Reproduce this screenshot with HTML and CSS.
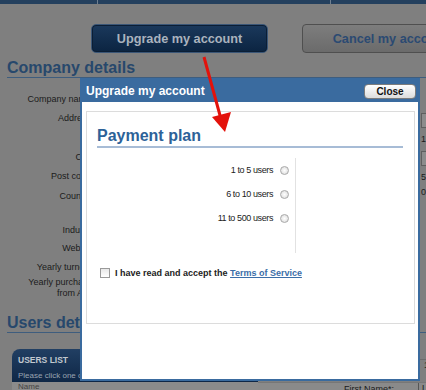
FILE: index.html
```html
<html><head><meta charset="UTF-8">
    <link rel="stylesheet" href="styles.css">
</head>
<body>

    <div id="strona">
        <div class="topbar"><span class="tick tick1"></span><span class="tick tick2"></span></div>

        <div class="actions">
            <button class="btn btn-upgrade">Upgrade my account</button>
            <button class="btn btn-cancel">Cancel my account</button>
        </div>

        <h2 class="section">Company details</h2>
        <div class="company">
            <div class="labels">
                <div class="row">Company name*:</div>
                <div class="row row-tall">Address*:</div>
                <div class="row">City*:</div>
                <div class="row row-20">Post code*:</div>
                <div class="row row-mid">Country*:</div>
                <div class="row row-18">Industry:</div>
                <div class="row">Website:</div>
                <div class="row row-16">Yearly turnover</div>
                <div class="row row-2">Yearly purchases<br>from Asia:</div>
            </div>
            <div class="values"></div>
            <div class="side">
                <div class="side-input"></div>
                <div class="side-text">1</div>
                <div class="side-input side-input2"></div>
                <div class="side-text">5</div>
                <div class="side-text side-text3">0</div>
            </div>
        </div>

        <h2 class="section section-users">Users details</h2>
        <div class="users">
            <div class="users-list">
                <div class="users-head">
                    <div class="users-title">USERS LIST</div>
                    <div class="users-hint">Please click one of the users to edit</div>
                </div>
                <div class="users-cols">Name</div>
            </div>
            <div class="user-form">
                <div class="uf-top">1</div>
                <div class="uf-row">
                    <span class="uf-label">First Name*:</span>
                    <span class="uf-value">Li</span>
                </div>
            </div>
        </div>
    </div>

    <!-- okno dialogowe nad strona -->
    <div class="dialog">
        <div class="dialog-bar">
            <span class="dialog-title">Upgrade my account</span>
            <button class="btn-close">Close</button>
        </div>
        <div class="dialog-body">
            <div class="plan-panel">
                <h3 class="plan-title">Payment plan</h3>
                <div class="plans">
                    <div class="plan">1 to 5 users <span class="radio"></span></div>
                    <div class="plan">6 to 10 users <span class="radio"></span></div>
                    <div class="plan">11 to 500 users <span class="radio"></span></div>
                </div>
                <div class="terms">
                    <span class="checkbox"></span>
                    <span class="terms-text">I have read and accept the <a href="#">Terms of Service</a></span>
                </div>
            </div>
        </div>
    </div>

    <svg class="arrow" width="426" height="390">
        <line x1="204" y1="57" x2="221" y2="119" stroke="#e3120b" stroke-width="3"></line>
        <polygon points="212,117 231,112 225,132" fill="#e3120b"></polygon>
    </svg>

</body></html>
```

FILE: styles.css
```css
body {
    margin: 0;
    font-family: "Liberation Sans", Arial, sans-serif;
    background-color: #7f7f7f;
    overflow: hidden;
}

#strona {
    width: 426px;
    height: 390px;
    overflow: hidden;
}

.topbar {
    height: 4px;
    background-color: #24405e;
}

.tick {
    display: inline-block;
    width: 1px;
    height: 4px;
    background-color: #6f7f90;
    vertical-align: top;
}

.tick1 {
    margin-left: 97px;
}

.tick2 {
    margin-left: 232px;
}

.actions {
    display: flex;
    gap: 34px;
    padding: 20px 0 0 91px;
}

.btn {
    flex: none;
    width: 177px;
    height: 29px;
    font-family: "Liberation Sans", Arial, sans-serif;
    font-size: 12.7px;
    font-weight: bold;
    padding: 0;
}

.btn-upgrade {
    border: 1px solid #3a5677;
    border-radius: 5px;
    background: linear-gradient(#1b395c, #0b2441);
    box-shadow: inset 0 0 0 1px #0b1e35;
    color: #aab3be;
}

.btn-cancel {
    border: 1px solid #4f4f4f;
    border-radius: 4px;
    background: linear-gradient(#7d7d7d, #6b6b6b);
    color: #2b4a72;
}

.section {
    margin: 5px 0 0 7px;
    font-size: 16px;
    line-height: 19px;
    font-weight: bold;
    color: #27486c;
    border-bottom: 1px solid #3e5d7e;
}

.section-users {
    margin-top: 14px;
}

.company {
    display: flex;
    padding-top: 15px;
}

.labels {
    flex: none;
    width: 97px;
    text-align: right;
    font-size: 9px;
    color: #1b1b1b;
}

.row {
    height: 19px;
    line-height: 12px;
}

.row-tall {
    height: 39px;
}

.row-20 {
    height: 20px;
}

.row-mid {
    height: 34px;
}

.row-18 {
    height: 18px;
}

.row-16 {
    height: 16px;
}

.row-2 {
    height: 22px;
    line-height: 11px;
}

.values {
    flex: none;
    width: 324px;
}

.side {
    flex: none;
    width: 40px;
    padding-top: 20px;
    font-size: 9px;
    color: #1b1b1b;
}

.side-input {
    height: 13px;
    border: 1px solid #5f5f5f;
    background-color: #8c8c8c;
}

.side-input2 {
    margin-top: 6px;
}

.side-text {
    line-height: 12px;
    margin-top: 5px;
}

.side-text3 {
    margin-top: 3px;
}

.users {
    display: flex;
    margin-top: 16px;
}

.users-list {
    flex: none;
    width: 246px;
    margin-left: 12px;
}

.users-head {
    height: 33px;
    border-radius: 8px 0 0 0;
    background: linear-gradient(#213f63, #0f2746);
    padding: 6px 0 0 6px;
    box-sizing: border-box;
}

.users-title {
    font-size: 8.5px;
    font-weight: bold;
    line-height: 10px;
    color: #c2c8cf;
}

.users-hint {
    margin-top: 6px;
    font-size: 8px;
    line-height: 10px;
    color: #9aa3b0;
}

.users-cols {
    height: 10px;
    background-color: #8b8b8b;
    font-size: 8px;
    padding-left: 6px;
    color: #444;
}

.user-form {
    flex: 1;
    margin-top: 10px;
    border-top: 1px solid #6c6c6c;
    font-size: 9px;
    color: #1b1b1b;
}

.uf-top {
    height: 22px;
    line-height: 10px;
    text-align: right;
}

.uf-row {
    display: flex;
    height: 10px;
    background-color: #8a8a8a;
    border-top: 1px solid #777;
}

.uf-label {
    width: 136px;
    text-align: right;
    padding-top: 1px;
}

.uf-value {
    margin-left: 24px;
    padding-left: 3px;
    border-left: 1px solid #555;
}

.dialog {
    position: absolute;
    left: 80px;
    top: 78px;
    width: 340px;
    height: 303px;
    box-sizing: border-box;
    border: 2px solid #3a6b9f;
    background-color: white;
}

.dialog-bar {
    display: flex;
    align-items: center;
    justify-content: space-between;
    height: 22px;
    background-color: #3a6b9f;
    padding: 0 2px 0 4px;
}

.dialog-title {
    font-size: 12px;
    font-weight: bold;
    color: white;
}

.btn-close {
    width: 52px;
    height: 15px;
    padding: 0;
    border: 1px solid #7c7c7c;
    border-radius: 4px;
    background: linear-gradient(#ffffff, #dcdcdc);
    font-family: "Liberation Sans", Arial, sans-serif;
    font-size: 10px;
    font-weight: bold;
    color: #111;
}

.dialog-body {
    padding: 9px 3px 0 4px;
}

.plan-panel {
    height: 213px;
    box-sizing: border-box;
    border: 1px solid #dcdcdc;
    padding: 14px 11px 0 10px;
}

.plan-title {
    margin: 0;
    font-size: 16px;
    line-height: 20px;
    font-weight: bold;
    color: #2d6298;
    border-bottom: 2px solid #a7bcd6;
}

.plans {
    width: 199px;
    box-sizing: border-box;
    margin-top: 10px;
    padding: 0 6px 23px 0;
    border-right: 1px solid #e2e2e2;
}

.plan {
    display: flex;
    justify-content: flex-end;
    align-items: center;
    gap: 7px;
    height: 24px;
    font-size: 9px;
    letter-spacing: -0.4px;
    color: #222;
}

.radio {
    width: 9px;
    height: 9px;
    box-sizing: border-box;
    border: 1px solid #a9a9a9;
    border-radius: 50%;
    background: radial-gradient(#ffffff, #d8d8d8);
}

.terms {
    display: flex;
    align-items: center;
    gap: 5px;
    margin-top: 15px;
    padding-left: 3px;
    font-size: 9px;
    font-weight: bold;
    color: #222;
}

.checkbox {
    flex: none;
    width: 10px;
    height: 10px;
    box-sizing: border-box;
    border: 1px solid #9a9a9a;
    background: linear-gradient(#e8e8e8, #ffffff);
}

.terms-text a {
    color: #3b6ea8;
}

.arrow {
    position: absolute;
    left: 0;
    top: 0;
    pointer-events: none;
}
```
